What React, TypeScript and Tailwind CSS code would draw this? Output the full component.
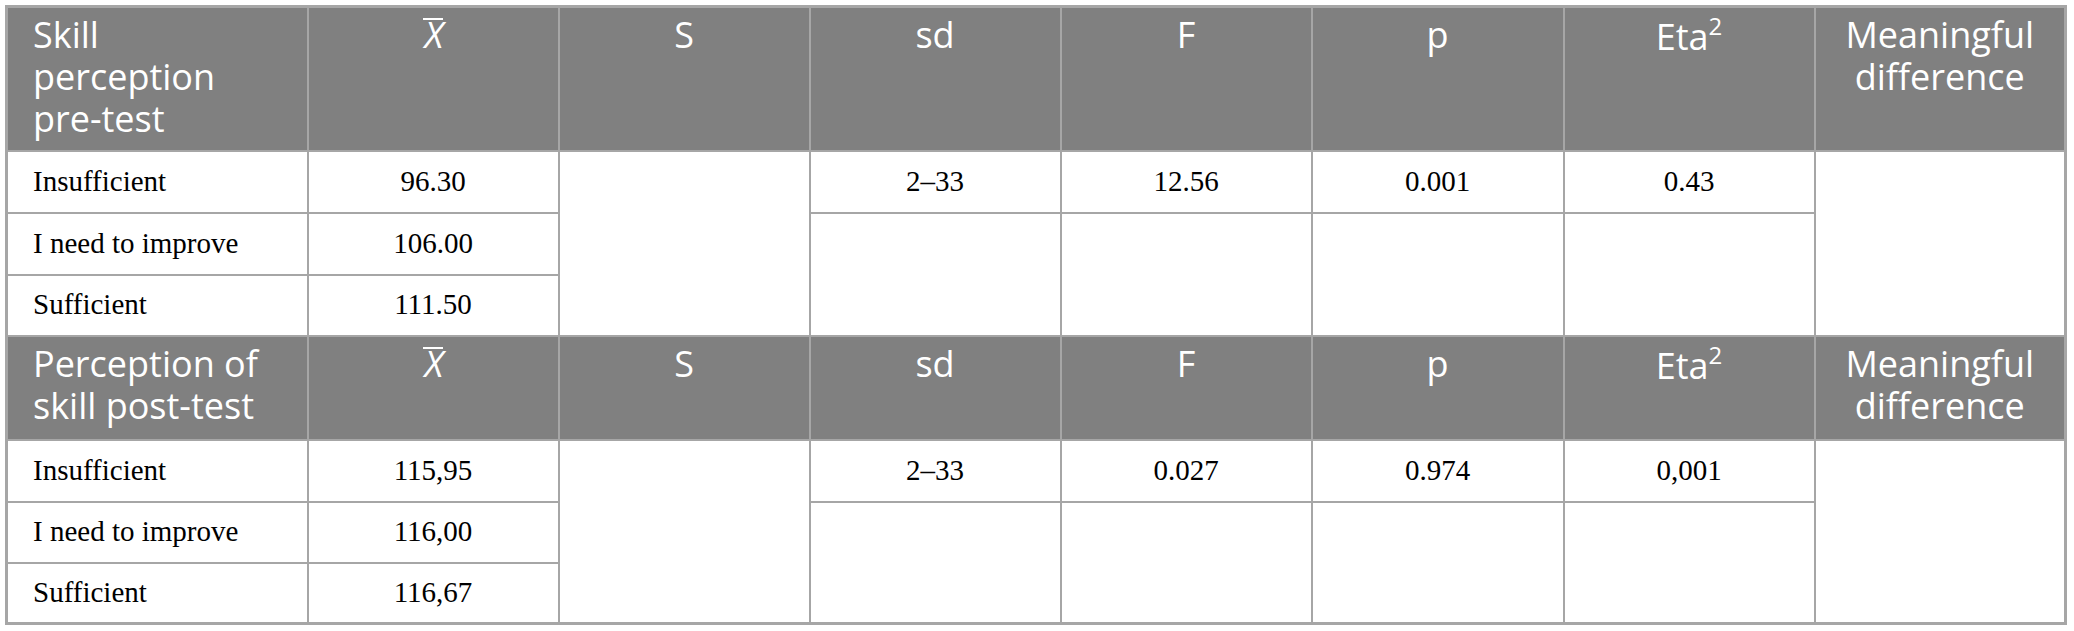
import React from "react"

const line = "border-2 border-[#a6a6a6]"
const head = `${line} bg-[#808080] align-top pt-[6px] px-[25px] text-[36px] leading-[42px] font-normal text-white text-center`
const cell = `${line} align-middle px-[25px] text-[29px] text-black text-center`

function HeaderRow({ label, h }: { label: string; h: string }) {
  return (
    <tr className={h}>
      <th className={`${head} text-left`}>{label}</th>
      <th className={head}>
        <span className="inline-block italic border-t-2 border-white leading-[30px] pl-[2px]">X</span>
      </th>
      <th className={head}>S</th>
      <th className={head}>sd</th>
      <th className={head}>F</th>
      <th className={head}>p</th>
      <th className={head}>
        Eta<span className="text-[24px] leading-none align-[15px]">2</span>
      </th>
      <th className={head}>Meaningful difference</th>
    </tr>
  )
}

function Block({
  label,
  heights,
  means,
  stats,
}: {
  label: string
  heights: string[]
  means: string[]
  stats: string[]
}) {
  return (
    <>
      <HeaderRow label={label} h={heights[0]} />
      <tr className={heights[1]}>
        <td className={`${cell} text-left`}>Insufficient</td>
        <td className={cell}>{means[0]}</td>
        <td className={cell} rowSpan={3}></td>
        {stats.map((s, i) => (
          <td key={i} className={cell}>
            {s}
          </td>
        ))}
        <td className={cell} rowSpan={3}></td>
      </tr>
      <tr className={heights[2]}>
        <td className={`${cell} text-left`}>I need to improve</td>
        <td className={cell}>{means[1]}</td>
        <td className={cell} rowSpan={2}></td>
        <td className={cell} rowSpan={2}></td>
        <td className={cell} rowSpan={2}></td>
        <td className={cell} rowSpan={2}></td>
      </tr>
      <tr className={heights[3]}>
        <td className={`${cell} text-left`}>Sufficient</td>
        <td className={cell}>{means[2]}</td>
      </tr>
    </>
  )
}

export default function App() {
  return (
    <div className="w-[2074px] h-[631px] bg-white pt-[5px] pl-[5px]">
      <table className="table-fixed w-[2062px] border-collapse border-[3px] border-[#a6a6a6] font-['Liberation_Serif',serif] [&_th]:font-['Open_Sans',sans-serif]">
        <colgroup>
          <col className="w-[301px]" />
          <col className="w-[251px]" />
          <col className="w-[251px]" />
          <col className="w-[251px]" />
          <col className="w-[251px]" />
          <col className="w-[252px]" />
          <col className="w-[251px]" />
          <col className="w-[251px]" />
        </colgroup>
        <tbody>
          <Block
            label="Skill perception pre-test"
            heights={["h-[144px]", "h-[62px]", "h-[62px]", "h-[61px]"]}
            means={["96.30", "106.00", "111.50"]}
            stats={["2–33", "12.56", "0.001", "0.43"]}
          />
          <Block
            label="Perception of skill post-test"
            heights={["h-[104px]", "h-[62px]", "h-[61px]", "h-[61px]"]}
            means={["115,95", "116,00", "116,67"]}
            stats={["2–33", "0.027", "0.974", "0,001"]}
          />
        </tbody>
      </table>
    </div>
  )
}
